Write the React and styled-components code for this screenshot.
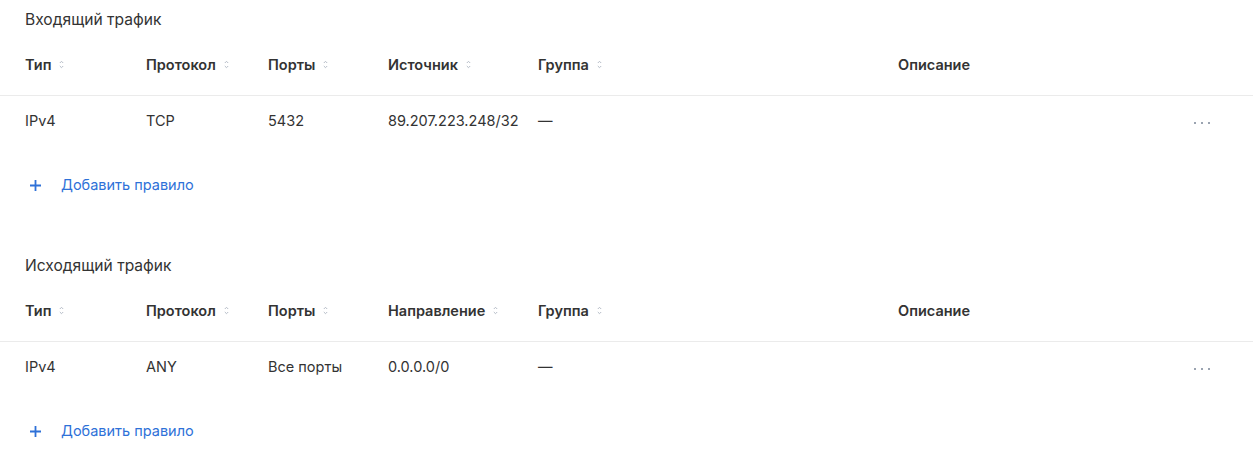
import React from 'react'
import styled, { createGlobalStyle } from 'styled-components'

const GlobalStyle = createGlobalStyle`
  body {
    margin: 0;
    background: #fff;
    font-family: Inter, 'Liberation Sans', sans-serif;
    color: #333;
  }
`

const Page = styled.div`
  display: flex;
  flex-direction: column;
  gap: 45px;
  padding-top: 9px;
`

const Section = styled.section`
  display: flex;
  flex-direction: column;
`

const Title = styled.h3`
  margin: 0 0 4px 25px;
  font-size: 15.6px;
  line-height: 21px;
  font-weight: 400;
  color: #333;
`

const columns = '25px 121px 122px 120px 150px 360px 1fr 60px'

const HeaderRow = styled.div`
  display: grid;
  grid-template-columns: ${columns};
  align-items: center;
  height: 61px;
  border-bottom: 1px solid #ebebeb;
`

const Row = styled.div`
  display: grid;
  grid-template-columns: ${columns};
  align-items: center;
  height: 50px;
`

const HeadCell = styled.div`
  grid-column: ${(p) => p.col};
  display: flex;
  align-items: center;
  gap: 8px;
  font-size: 14.5px;
  line-height: 20px;
  font-weight: 600;
  color: #333;
`

const Cell = styled.div`
  grid-column: ${(p) => p.col};
  font-size: 14.5px;
  line-height: 20px;
  color: #333;
  white-space: nowrap;
`

const Dots = styled.button`
  grid-column: 8;
  display: flex;
  gap: 5px;
  padding: 4px 0 0 1px;
  border: 0;
  background: none;
  cursor: pointer;

  span {
    width: 2px;
    height: 2px;
    background: #9ba4b1;
  }
`

const AddButton = styled.button`
  display: flex;
  align-items: center;
  gap: 20px;
  height: 50px;
  margin-top: 14px;
  padding: 0 0 0 30px;
  border: 0;
  background: none;
  align-self: flex-start;
  font-family: inherit;
  font-size: 14.5px;
  line-height: 20px;
  color: #2e71d8;
  cursor: pointer;
`

const SortIcon = () => (
  <svg width="5" height="9" viewBox="0 0 5 9" fill="none">
    <path d="M0.8 3 L2.5 1.3 L4.2 3" stroke="#b4bbc6" strokeWidth="1" />
    <path d="M0.8 6 L2.5 7.7 L4.2 6" stroke="#b4bbc6" strokeWidth="1" />
  </svg>
)

const PlusIcon = () => (
  <svg width="11" height="11" viewBox="0 0 11 11">
    <path d="M5.5 0 V11 M0 5.5 H11" stroke="#2e71d8" strokeWidth="1.8" />
  </svg>
)

const RuleTable = ({ title, target, rows }) => {
  const heads = [
    ['Тип', true],
    ['Протокол', true],
    ['Порты', true],
    [target, true],
    ['Группа', true],
    ['Описание', false],
  ]
  return (
    <Section>
      <Title>{title}</Title>
      <HeaderRow>
        {heads.map(([label, sortable], i) => (
          <HeadCell key={label} col={i + 2}>
            {label}
            {sortable && <SortIcon />}
          </HeadCell>
        ))}
      </HeaderRow>
      {rows.map((row, r) => (
        <Row key={r}>
          {row.map((value, i) => (
            <Cell key={i} col={i + 2}>
              {value}
            </Cell>
          ))}
          <Dots aria-label="Действия">
            <span />
            <span />
            <span />
          </Dots>
        </Row>
      ))}
      <AddButton>
        <PlusIcon />
        Добавить правило
      </AddButton>
    </Section>
  )
}

export default function App() {
  return (
    <Page>
      <GlobalStyle />
      <RuleTable
        title="Входящий трафик"
        target="Источник"
        rows={[['IPv4', 'TCP', '5432', '89.207.223.248/32', '—', '']]}
      />
      <RuleTable
        title="Исходящий трафик"
        target="Направление"
        rows={[['IPv4', 'ANY', 'Все порты', '0.0.0.0/0', '—', '']]}
      />
    </Page>
  )
}
